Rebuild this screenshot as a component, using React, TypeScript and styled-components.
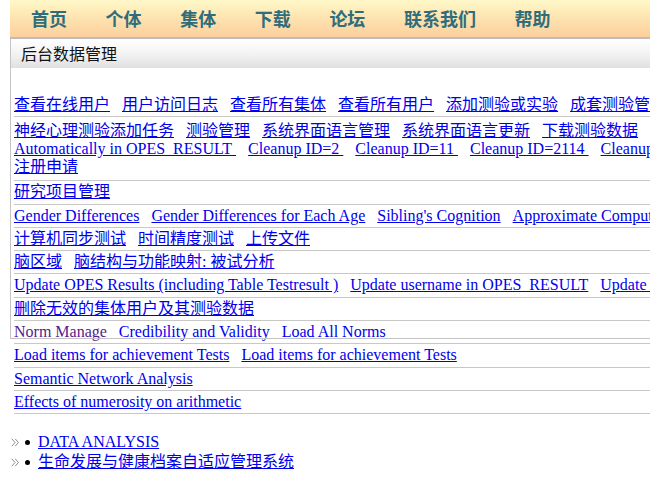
import React from 'react'
import styled, { createGlobalStyle } from 'styled-components'

const GlobalStyle = createGlobalStyle`
  html, body {
    margin: 0;
    padding: 0;
    overflow: hidden;
    background: #fff;
  }
  body {
    font-family: "Liberation Serif", "Noto Sans CJK SC", serif;
    font-size: 16px;
    color: #000;
  }
`

const Page = styled.div`
  padding-left: 10px;
`

const NavBar = styled.ul`
  display: flex;
  align-items: center;
  gap: 38.6px;
  height: 37px;
  margin: 0;
  padding: 0 0 0 21px;
  list-style: none;
  background: linear-gradient(to bottom, #fff8c9 0%, #fee5b1 45%, #fccf9d 100%);
  border-bottom: 2px solid #bdbdbd;
`

const NavItem = styled.li`
  font-family: "Noto Sans CJK SC", sans-serif;
  font-weight: 700;
  font-size: 18px;
  line-height: 37px;
  color: #2f6d7c;
  white-space: nowrap;
`

const Panel = styled.section`
  position: relative;

  &::after {
    content: '';
    position: absolute;
    left: 0;
    top: 0;
    width: 100%;
    height: 300px;
    box-sizing: border-box;
    border-left: 1px solid #c4c4c4;
    border-bottom: 1px solid #c4c4c4;
    pointer-events: none;
  }
`

const PanelTitle = styled.h2`
  margin: 0;
  height: 29px;
  padding-left: 11px;
  font-family: "Noto Sans CJK SC", sans-serif;
  font-size: 16px;
  font-weight: 400;
  line-height: 29px;
  color: #111;
  background: linear-gradient(to bottom, #ffffff 0%, #f3f3f3 50%, #e0e0e0 100%);
`

const LinkList = styled.div`
  margin-left: 4px;
  padding-top: 26px;
`

const Row = styled.div<{ $pad?: string }>`
  padding: ${p => p.$pad ?? '2px 0 2.3px'};
  border-bottom: 1px solid #c8c8c8;
  line-height: 18px;
  white-space: nowrap;
`

const Line = styled.div`
  white-space: nowrap;
`

const Link = styled.a<{ $visited?: boolean }>`
  color: ${p => (p.$visited ? '#551a8b' : '#0000ee')};
  text-decoration: underline;
  margin-right: 12px;
  cursor: pointer;
`

const Bullets = styled.ul`
  margin: 18px 0 0;
  padding: 0;
  list-style: none;
`

const BulletItem = styled.li`
  display: flex;
  align-items: center;
  height: 20px;
  line-height: 20px;
  white-space: nowrap;
`

const Chevron = styled.svg`
  width: 8px;
  height: 9px;
  margin-left: 1px;
  flex: none;
`

const Dot = styled.span`
  width: 5px;
  height: 5px;
  border-radius: 50%;
  background: #000;
  margin: 0 8px 0 6px;
  flex: none;
`

const BulletLink = styled.a`
  color: #0000ee;
  text-decoration: underline;
  cursor: pointer;
`

type Item = { text: string; visited?: boolean }
type RowData = { pad?: string; lines: Item[][] }

const nav = ['首页', '个体', '集体', '下载', '论坛', '联系我们', '帮助']

const t = (...texts: string[]): Item[] => texts.map(text => ({ text }))

const rows: RowData[] = [
  { lines: [t('查看在线用户', '用户访问日志', '查看所有集体', '查看所有用户', '添加测验或实验', '成套测验管理')] },
  {
    pad: '5px 0 4px',
    lines: [
      t('神经心理测验添加任务', '测验管理', '系统界面语言管理', '系统界面语言更新', '下载测验数据'),
      t('Automatically in OPES_RESULT\u00a0', 'Cleanup ID=2\u00a0', 'Cleanup ID=11\u00a0', 'Cleanup ID=2114\u00a0', 'Cleanup ID=2115\u00a0'),
      t('注册申请'),
    ],
  },
  { lines: [t('研究项目管理')] },
  { lines: [t('Gender Differences', 'Gender Differences for Each Age', "Sibling's Cognition", 'Approximate Computation')] },
  { lines: [t('计算机同步测试', '时间精度测试', '上传文件')] },
  { lines: [t('脑区域', '脑结构与功能映射: 被试分析')] },
  { lines: [t('Update OPES Results (including Table Testresult )', 'Update username in OPES_RESULT', 'Update OPES_RESULT')] },
  { lines: [t('删除无效的集体用户及其测验数据')] },
  { lines: [[{ text: 'Norm Manage', visited: true }, ...t('Credibility and Validity', 'Load All Norms')]] },
  { lines: [t('Load items for achievement Tests', 'Load items for achievement Tests')] },
  { lines: [t('Semantic Network Analysis')] },
  { lines: [t('Effects of numerosity on arithmetic')] },
]

const bullets = ['DATA ANALYSIS', '生命发展与健康档案自适应管理系统']

function ChevronIcon() {
  return (
    <Chevron viewBox="0 0 8 9">
      <path d="M0.8 0.8 L4 4.5 L0.8 8.2 M4.2 0.8 L7.4 4.5 L4.2 8.2" fill="none" stroke="#8c8c8c" strokeWidth="1" />
    </Chevron>
  )
}

export default function App() {
  return (
    <Page>
      <GlobalStyle />
      <NavBar>
        {nav.map(n => (
          <NavItem key={n}>{n}</NavItem>
        ))}
      </NavBar>
      <Panel>
        <PanelTitle>后台数据管理</PanelTitle>
        <LinkList>
          {rows.map((row, i) => (
            <Row key={i} $pad={row.pad}>
              {row.lines.map((line, j) => (
                <Line key={j}>
                  {line.map((item, k) => (
                    <Link key={k} $visited={item.visited}>
                      {item.text}
                    </Link>
                  ))}
                </Line>
              ))}
            </Row>
          ))}
        </LinkList>
      </Panel>
      <Bullets>
        {bullets.map(b => (
          <BulletItem key={b}>
            <ChevronIcon />
            <Dot />
            <BulletLink>{b}</BulletLink>
          </BulletItem>
        ))}
      </Bullets>
    </Page>
  )
}
